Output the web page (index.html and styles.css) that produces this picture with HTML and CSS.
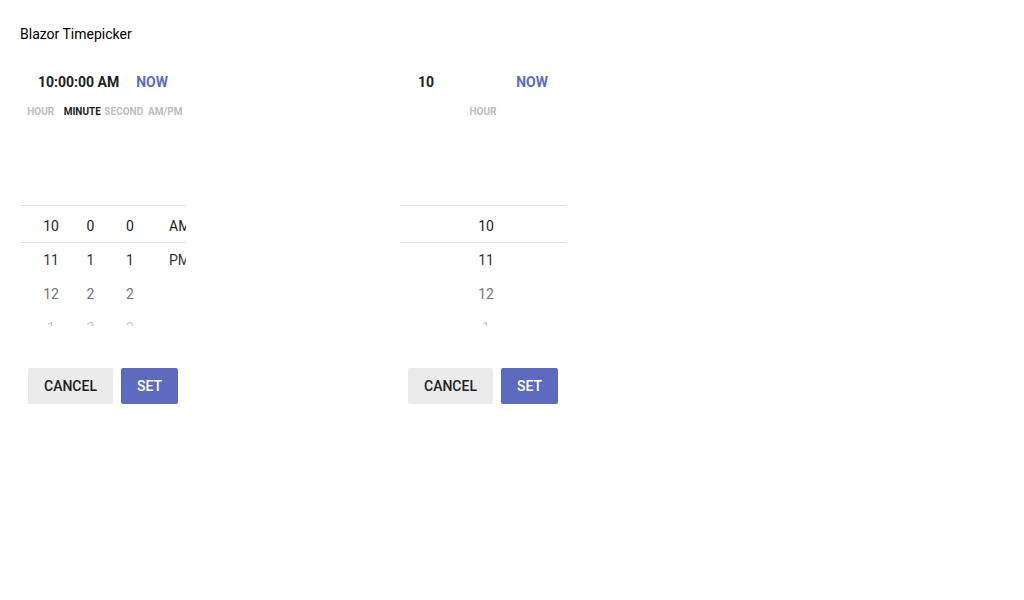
FILE: index.html
```html
<!DOCTYPE html>
<html>
<head>
<meta charset="utf-8">
<title>Blazor Timepicker</title>
<link rel="stylesheet" href="styles.css">
</head>
<body>
<div class="page">
  <div class="title">Blazor Timepicker</div>
  <div class="pickers">
    <div class="picker">
      <div class="header">
        <span class="time">10:00:00 AM</span>
        <span class="now">NOW</span>
      </div>
      <div class="labels">
        <span class="label">HOUR</span>
        <span class="label active">MINUTE</span>
        <span class="label">SECOND</span>
        <span class="label">AM/PM</span>
      </div>
      <div class="wheel">
        <div class="row selected multi">
          <span class="cell">10</span><span class="cell">0</span><span class="cell">0</span><span class="cell ampm">AM</span>
        </div>
        <div class="row near multi">
          <span class="cell">11</span><span class="cell">1</span><span class="cell">1</span><span class="cell ampm">PM</span>
        </div>
        <div class="row far multi">
          <span class="cell">12</span><span class="cell">2</span><span class="cell">2</span><span class="cell ampm"></span>
        </div>
        <div class="row fade multi">
          <span class="cell">1</span><span class="cell">3</span><span class="cell">3</span><span class="cell ampm"></span>
        </div>
      </div>
      <div class="actions">
        <button class="btn cancel">CANCEL</button>
        <button class="btn set">SET</button>
      </div>
    </div>

    <div class="picker">
      <div class="header">
        <span class="time">10</span>
        <span class="now">NOW</span>
      </div>
      <div class="labels single">
        <span class="label">HOUR</span>
      </div>
      <div class="wheel">
        <div class="row selected single"><span class="cell">10</span></div>
        <div class="row near single"><span class="cell">11</span></div>
        <div class="row far single"><span class="cell">12</span></div>
        <div class="row fade single"><span class="cell">1</span></div>
      </div>
      <div class="actions">
        <button class="btn cancel">CANCEL</button>
        <button class="btn set">SET</button>
      </div>
    </div>
  </div>
</div>
</body>
</html>
```

FILE: styles.css
```css
* { box-sizing: border-box; }
html, body { margin: 0; padding: 0; background: #fff; }
body {
  font-family: Roboto, "Liberation Sans", Arial, sans-serif;
  color: #212121;
}
.page { padding: 24px 20px 0 20px; }
.title {
  font-size: 14px;
  line-height: 20px;
  color: #000;
}
.pickers {
  display: flex;
  gap: 214px;
  margin-top: 20px;
}
.picker {
  width: 166px;
  overflow: hidden;
}
.header {
  display: flex;
  justify-content: space-between;
  align-items: center;
  height: 36px;
  padding: 0 18px;
  font-size: 14px;
  font-weight: 700;
}
.time { color: #212121; }
.now { color: #5c6bc0; }
.labels {
  display: grid;
  grid-template-columns: repeat(4, 1fr);
  margin-top: 5px;
  height: 14px;
  line-height: 14px;
  font-size: 10px;
  font-weight: 700;
  text-align: center;
}
.labels.single { grid-template-columns: 1fr; }
.label { color: #bdbdbd; white-space: nowrap; }
.label.active { color: #212121; }
.wheel {
  height: 207px;
  overflow: hidden;
  padding-top: 86px;
  font-size: 14px;
}
.row {
  display: flex;
  height: 34px;
  line-height: 34px;
  white-space: nowrap;
}
.row.multi { padding-left: 11px; }
.row.single { padding-left: 6px; }
.row.single .cell { width: 100%; }
.row.selected {
  height: 38px;
  line-height: 32px;
  padding-top: 4px;
  border-top: 1px solid #e0e0e0;
  border-bottom: 1px solid #e0e0e0;
  color: #212121;
}
.row.near { color: #333; }
.row.far { color: #757575; }
.row.fade { color: #c8c8c8; }
.cell {
  flex: none;
  width: 40px;
  text-align: center;
}
.cell:nth-child(2) { width: 39px; }
.cell.ampm {
  width: 60px;
  text-align: left;
  padding-left: 19px;
}
.actions {
  display: flex;
  gap: 8px;
  padding-left: 8px;
  margin-top: 42px;
}
.btn {
  height: 36px;
  padding: 0 16px;
  border: none;
  border-radius: 2px;
  font-family: Roboto, "Liberation Sans", Arial, sans-serif;
  font-size: 14px;
  font-weight: 500;
  cursor: pointer;
}
.btn.cancel { background: #ebebeb; color: #212121; }
.btn.set { background: #5c6bc0; color: #fff; }
```
